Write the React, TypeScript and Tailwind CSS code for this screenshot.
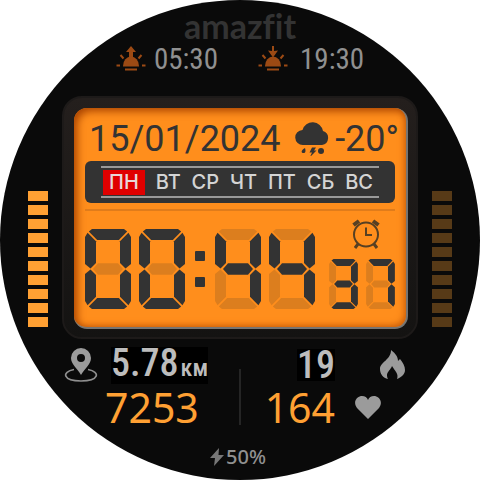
import React from "react";

const SEGMENTS: Record<string, string> = {
  a: "3.8,2.5 7,0 39,0 42.2,2.5 33.8,11 12.2,11",
  b: "46,8 43.4,3.8 35,12.2 35,34 40.5,39.5 46,35",
  c: "40.5,40.500 35,46 35,67.8 43.4,76.2 46,72 46,45",
  d: "3.8,77.5 7,80 39,80 42.2,77.5 33.8,69 12.2,69",
  e: "5.5,40.5 11,46 11,67.8 2.6,76.2 0,72 0,45",
  f: "0,8 2.6,3.8 11,12.2 11,34 5.5,39.5 0,35",
  g: "8,40 13,34.3 33,34.3 38,40 33,45.7 13,45.7",
};

const LIT: Record<string, string> = {
  "0": "abcdef",
  "3": "abcdg",
  "4": "bcfg",
  "7": "abc",
};

function Digit({ value, className }: { value: string; className: string }) {
  return (
    <svg viewBox="0 0 46 80" className={className} role="img" aria-label={value}>
      {Object.entries(SEGMENTS).map(([name, points]) => (
        <polygon key={name} points={points} fill={LIT[value].includes(name) ? "#333333" : "#dc7e1e"} />
      ))}
    </svg>
  );
}

function Sun({ rising }: { rising: boolean }) {
  return (
    <svg viewBox="0 0 30 26" className="h-[26px] w-[30px]" fill="#9c4a14" aria-hidden="true">
      {rising ? (
        <path d="M15 0l5 6h-3v6h-4V6h-3z" />
      ) : (
        <path d="M14 0h2v5l4-.5-5 7-5-7 4 .5z" />
      )}
      <path d="M7 20a8 9.500 0 0 1 16 0v.500H7z" />
      <path d="M9 23.500h12M0.500 19.500h3.500M26 19.500h3.500M4.500 9l3 3.500M25.500 9l-3 3.500" stroke="#9c4a14" strokeWidth="2" />
    </svg>
  );
}

function Bars({ color }: { color: string }) {
  return (
    <div className="mb-3 flex w-5 shrink-0 flex-col gap-1" aria-hidden="true">
      {Array.from({ length: 10 }, (_, i) => (
        <div key={i} className={`h-2.5 ${color}`} />
      ))}
    </div>
  );
}

const DAYS = ["ПН", "ВТ", "СР", "ЧТ", "ПТ", "СБ", "ВС"];

function Screen() {
  return (
    <section className="rounded-[13px] border-r-2 border-b-2 border-[#777572] bg-[#ff8e1c] pr-[11px] pb-[18px] pl-[11px] shadow-[inset_4px_4px_8px_-1px_#a84300,inset_-3px_-3px_7px_-2px_#c85c08]">
      <div className="-mr-1 flex h-[53px] items-center justify-between pt-2 pl-1 font-['Roboto',sans-serif] text-4xl leading-none text-[#333333]">
        <time dateTime="2024-01-15">15/01/2024</time>
        <span className="flex items-center gap-1.5 whitespace-nowrap">
          <svg viewBox="0 0 34 34" className="h-[34px] w-[34px]" fill="#333333" aria-hidden="true">
            <path d="M8 23a7.500 7.500 0 0 1-.500-15A10.500 10.500 0 0 1 28 9a7.200 7.200 0 0 1-1 14z" />
            <path d="M10 26c1 3 .500 5-1.500 5S5 29 10 26zM17 25.500h4l-2 3h2.500L15 35l2-4.500h-2.500z" />
            <circle cx="26" cy="29" r="3" />
          </svg>
          -20°
        </span>
      </div>
      <div className="rounded-md bg-[#333333] px-4 py-[5px]">
        <ol className="flex h-8 items-center justify-between border-y-2 border-[#999999] pr-1.5 pl-0.5 font-['Inter',sans-serif] text-xl leading-[19px] font-medium text-[#d4d4d4]">
          {DAYS.map((day, i) => (
            <li key={day} className={i === 0 ? "bg-[#e00000] px-1.5 py-[3px] text-[#e8d8d8]" : ""}>
              {day}
            </li>
          ))}
        </ol>
      </div>
      <hr className="mt-1.5 border-t-2 border-[#e07c1b]" />
      <div className="mt-2 flex items-end justify-between">
        <div className="flex items-center gap-2">
          <Digit value="0" className="h-20 w-[46px]" />
          <Digit value="0" className="h-20 w-[46px]" />
          <div className="mx-0.5 flex w-2.5 flex-col gap-4">
            <i className="h-2.5 rounded-[1px] bg-[#333333]" />
            <i className="h-2.5 rounded-[1px] bg-[#333333]" />
          </div>
          <Digit value="4" className="h-20 w-[46px]" />
          <Digit value="4" className="h-20 w-[46px]" />
        </div>
        <div className="flex flex-col items-center gap-2.5">
          <svg viewBox="0 0 28 30" className="ml-2 h-[30px] w-7" fill="none" stroke="#574023" strokeWidth="2" aria-hidden="true">
            <circle cx="14" cy="15.500" r="12" />
            <path d="M14 8.500V16h6" />
            <path d="M6 25l-3 4M22 25l3 4" strokeWidth="3" />
            <path d="M1.500 6L7 2M21 2l5.500 4" strokeWidth="4" />
          </svg>
          <div className="flex gap-2">
            <Digit value="3" className="h-[50px] w-[29px]" />
            <Digit value="7" className="h-[50px] w-[29px]" />
          </div>
        </div>
      </div>
    </section>
  );
}

export default function App() {
  return (
    <main className="flex aspect-square w-full flex-col overflow-hidden rounded-full bg-[#0a0a0a] font-['Roboto_Condensed','Open_Sans_Condensed','Roboto',sans-serif]">
      <header className="flex h-24 shrink-0 flex-col items-center pt-2">
        <h1 className="h-9 font-['Lato',sans-serif] text-[34px] leading-9 font-bold text-[#333333] [font-variant-ligatures:none]">amazfit</h1>
        <div className="flex gap-10 text-[29px] leading-[30px] text-[#909090]">
          <div className="flex items-center gap-2">
            <Sun rising />
            <time>05:30</time>
          </div>
          <div className="flex items-center gap-3">
            <Sun rising={false} />
            <time>19:30</time>
          </div>
        </div>
      </header>

      <div className="flex items-end gap-3.5 px-7">
        <Bars color="bg-[#ffa033]" />
        <div className="min-w-0 flex-1 rounded-[20px] border-2 border-[#1d1a19] bg-linear-to-b from-[#241f1d] to-[#141312] pt-2.5 pr-2 pb-2 pl-2.5">
          <Screen />
        </div>
        <Bars color="bg-[#573a17]" />
      </div>

      <div className="grid grid-cols-[1fr_2px_1fr]">
        <div className="pt-1.5 pl-[63px]">
          <div className="flex h-10 items-center gap-3 text-[#bdbdbd]">
            <svg viewBox="0 0 36 36" className="h-9 w-9" aria-hidden="true">
              <path d="M11 22.500C-2 25 0 34 18 34s20-9 7-11.500" fill="none" stroke="#8f8f8f" strokeWidth="1.600" />
              <path fillRule="evenodd" d="M18 28C14 21 8 17 8 11a10 10 0 0 1 20 0c0 6-6 10-10 17zM18 7a4 4 0 1 0 0 8 4 4 0 0 0 0-8z" fill="#9b9b9b" />
            </svg>
            <p className="flex items-baseline gap-0.5 bg-black leading-8 font-medium">
              <span className="text-[38px]">5.78</span>
              <span className="text-2xl leading-8">км</span>
            </p>
          </div>
          <p className="pl-[42px] font-['Noto_Sans'] text-[41px] leading-[44px] text-[#ffa033]">7253</p>
        </div>
        <div className="mt-[30px] h-14 bg-[#252525]" />
        <div className="pt-1.5 pr-[75px]">
          <div className="flex h-10 items-center justify-end gap-11 text-[#bdbdbd]">
            <p className="bg-black text-[38px] leading-8 font-medium">19</p>
            <svg viewBox="0 0 26 30" className="h-[30px] w-[26px]" fill="#9b9b9b" aria-hidden="true">
              <path d="M12 0c5 4 7 7 7 11l2-2c3 4 5 7 5 11 0 4-3 7-8 9 2-5-2-8-5-13-1 3-5 6-5 9 0 2 .500 3 1 4-5-1-8-5-8-10C1 12 12 10 12 0z" />
            </svg>
          </div>
          <div className="flex items-center justify-end gap-5 pr-6">
            <p className="font-['Noto_Sans'] text-[41px] leading-[44px] text-[#ffa033]">164</p>
            <svg viewBox="0 0 26 23" className="h-[23px] w-[26px]" fill="#9b9b9b" aria-hidden="true">
              <path d="M13 23L2 12C-3 5 3 0 7 0c3 0 5 1.500 6 4 1-2.500 3-4 6-4 4 0 10 5 5 12z" />
            </svg>
          </div>
        </div>
      </div>

      <footer className="mt-3.5 flex items-center justify-center pr-1 font-['Noto_Sans'] text-xl font-medium text-[#909090]">
        <svg viewBox="0 0 14 18" className="h-[18px] w-3.5" fill="#777777" aria-hidden="true">
          <path d="M9 0L0 10h5l-1 8L14 7H8.500z" />
        </svg>
        <span className="pl-0.5">50%</span>
      </footer>
    </main>
  );
}
